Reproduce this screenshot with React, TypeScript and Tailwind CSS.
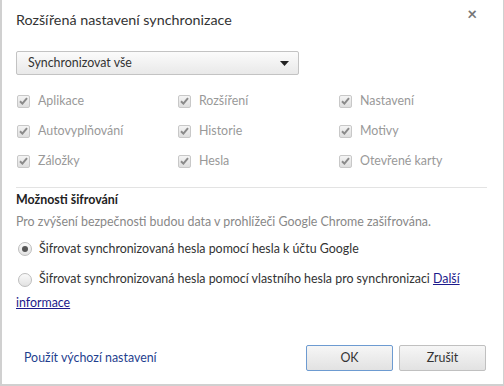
const items = [
  ["Aplikace", "Rozšíření", "Nastavení"],
  ["Autovyplňování", "Historie", "Motivy"],
  ["Záložky", "Hesla", "Otevřené karty"],
];

function Check() {
  return (
    <span className="flex h-[13px] w-[13px] items-center justify-center rounded-[2px] border border-[#c8c8c8] bg-gradient-to-b from-[#f4f4f4] to-[#dedede]">
      <svg width="9" height="8" viewBox="0 0 9 8">
        <path d="M1 4.2 L3.4 6.6 L8 1.2" fill="none" stroke="#8a8a8a" strokeWidth="2" />
      </svg>
    </span>
  );
}

function Radio({ on }: { on?: boolean }) {
  return (
    <span className="flex h-[14px] w-[14px] shrink-0 items-center justify-center rounded-full border border-[#bdbdbd] bg-gradient-to-b from-[#fafafa] to-[#e2e2e2]">
      {on && <span className="h-[6px] w-[6px] rounded-full bg-[#555]" />}
    </span>
  );
}

export default function App() {
  return (
    <div
      className="relative h-[386px] w-[504px] overflow-hidden border-b-2 border-l-2 border-r border-[#d0d0d0] bg-white text-[12.4px] text-[#333]"
      style={{ fontFamily: 'Lato, "Open Sans", sans-serif' }}
    >
      <button className="absolute right-[26px] top-[5px] text-[17px] font-bold leading-none text-[#777]">×</button>
      <div className="px-[14px] pt-[8px]">
        <h1 className="text-[14.3px] leading-[24px] text-[#333]">Rozšířená nastavení synchronizace</h1>

        <div className="mt-[19px] flex h-[24px] w-[283px] items-center justify-between rounded-[2px] border border-[#c3c3c3] bg-gradient-to-b from-[#fbfbfb] to-[#e9e9e9] pl-[11px] pr-[9px]">
          <span>Synchronizovat vše</span>
          <svg width="9" height="5" viewBox="0 0 9 5">
            <path d="M0 0 H9 L4.5 5 Z" fill="#222" />
          </svg>
        </div>

        <div className="mt-[17px] grid grid-cols-[161px_161px_1fr] gap-y-[12px] pl-[1px] text-[#999]">
          {items.flat().map((t) => (
            <label key={t} className="flex h-[18px] items-center gap-[8px]">
              <Check />
              <span>{t}</span>
            </label>
          ))}
        </div>

        <div className="mt-[17px] mr-[2px] border-t border-[#e3e3e3]" />

        <h2 className="mt-[3px] font-bold leading-[18px] text-[#222]">Možnosti šifrování</h2>
        <p className="mt-[4px] leading-[18px] text-[#888]">
          Pro zvýšení bezpečnosti budou data v prohlížeči Google Chrome zašifrována.
        </p>

        <label className="mt-[9px] flex items-center gap-[7px] pl-[2px] leading-[18px]">
          <Radio on />
          <span>Šifrovat synchronizovaná hesla pomocí hesla k účtu Google</span>
        </label>
        <div className="mt-[9px] leading-[24px]">
          <span className="mr-[7px] ml-[2px] inline-flex align-middle">
            <Radio />
          </span>
          <span>Šifrovat synchronizovaná hesla pomocí vlastního hesla pro synchronizaci </span>
          <a className="text-[#1c1a8c] underline">Další</a>{" "}
          <a className="text-[#1c1a8c] underline">informace</a>
        </div>

        <div className="mt-[30px] flex items-center justify-between">
          <a className="pl-[8px] text-[#1f3f8f]">Použít výchozí nastavení</a>
          <div className="flex gap-[6px] pr-[3px]">
            <button className="h-[26px] w-[87px] rounded-[2px] border border-[#6d9bd1] bg-gradient-to-b from-[#f6f6f6] to-[#e2e2e2] text-[#333]">
              OK
            </button>
            <button className="h-[26px] w-[87px] rounded-[2px] border border-[#c0c0c0] bg-gradient-to-b from-[#f6f6f6] to-[#e2e2e2] text-[#333]">
              Zrušit
            </button>
          </div>
        </div>
      </div>
    </div>
  );
}
